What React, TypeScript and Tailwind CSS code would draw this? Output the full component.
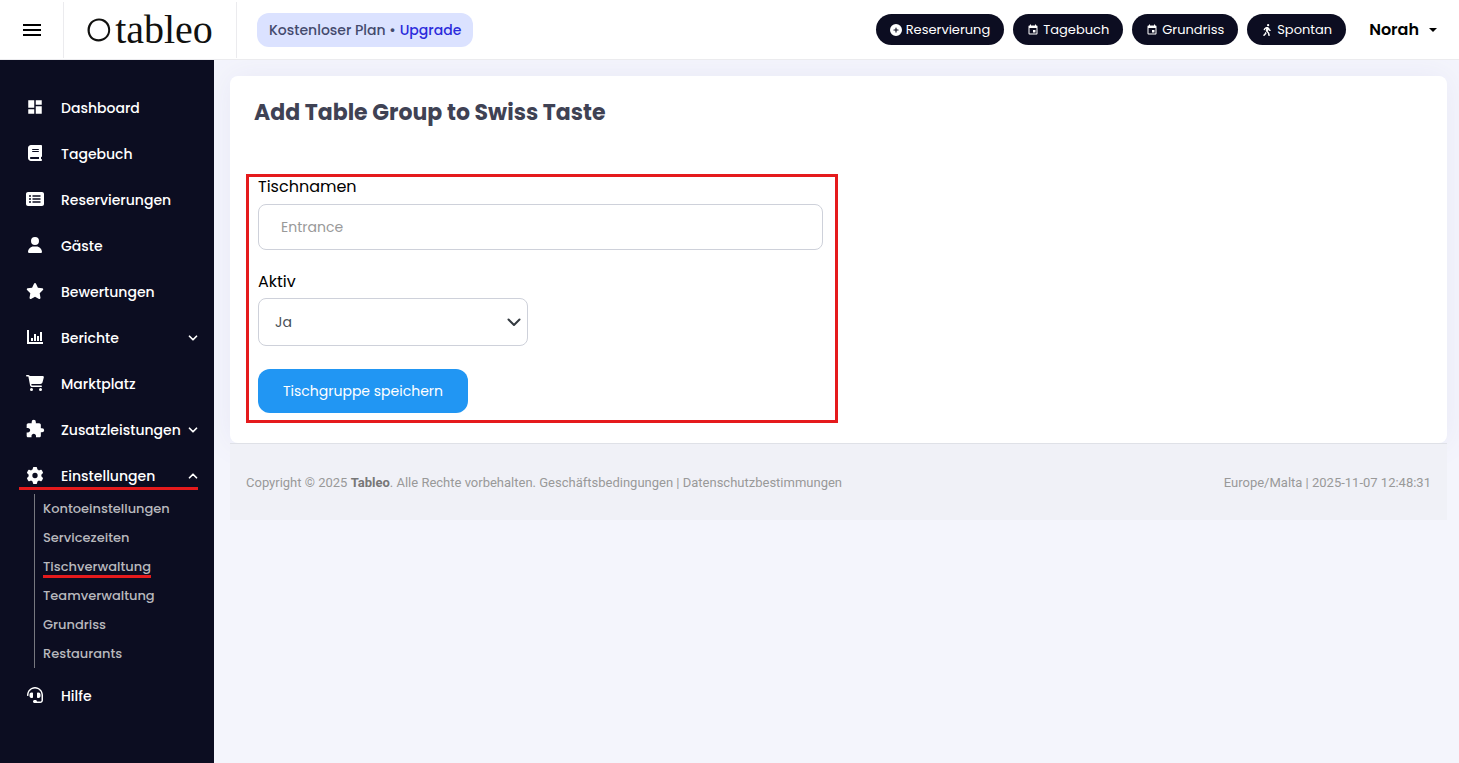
import React from 'react';
import {
  FaBook,
  FaRectangleList,
  FaUser,
  FaStar,
  FaCartShopping,
  FaGear,
  FaCirclePlus,
  FaPersonWalking,
} from 'react-icons/fa6';
import { FaHeadset } from 'react-icons/fa';
import { MdDashboard, MdEvent, MdExtension, MdMenu } from 'react-icons/md';
import { ChevronDown, ChevronUp } from 'lucide-react';

function ChartIcon({ className }: { className?: string }) {
  return (
    <svg viewBox="0 0 18 16" className={className} fill="currentColor">
      <path d="M1 1h2v12h14v2H1zM5 9h2v3H5zM8 5h2v7H8zM11 7h2v5h-2zM14 3h2v9h-2z" />
    </svg>
  );
}

const menu = [
  { label: 'Dashboard', icon: MdDashboard, size: 'h-[18px] w-[18px]' },
  { label: 'Tagebuch', icon: FaBook, size: 'h-4 w-[18px]' },
  { label: 'Reservierungen', icon: FaRectangleList, size: 'h-4 w-[18px]' },
  { label: 'Gäste', icon: FaUser, size: 'h-4 w-[18px]' },
  { label: 'Bewertungen', icon: FaStar, size: 'h-[18px] w-[18px]' },
  { label: 'Berichte', icon: ChartIcon, size: 'h-4 w-[18px]', chevron: 'down' },
  { label: 'Marktplatz', icon: FaCartShopping, size: 'h-4 w-[18px]' },
  { label: 'Zusatzleistungen', icon: MdExtension, size: 'h-5 w-5', chevron: 'down' },
];

const settings = [
  'Kontoeinstellungen',
  'Servicezeiten',
  'Tischverwaltung',
  'Teamverwaltung',
  'Grundriss',
  'Restaurants',
];

const actions = [
  { label: 'Reservierung', icon: FaCirclePlus },
  { label: 'Tagebuch', icon: MdEvent },
  { label: 'Grundriss', icon: MdEvent },
  { label: 'Spontan', icon: FaPersonWalking },
];

function Logo() {
  return (
    <a href="#" aria-label="tableo" className="flex items-center gap-1 text-[#11110f]">
      <svg viewBox="0 0 24 24" className="h-6 w-6" fill="currentColor" fillRule="evenodd">
        <path d="M12 .5C18.5.5 23.200 5.200 23.200 11.800C23.200 18.500 18 23.500 11.500 23.500C5 23.500.5 18.500.5 12C.5 5.500 5.500.5 12 .5ZM12.500 2.500C7 2 3.300 6 2.800 11.500C2.300 17 6 21.300 11.500 21.300C17 21.300 21.200 17.300 21.200 12C21.200 7 17.500 3 12.500 2.500Z" />
      </svg>
      <span className="font-['Liberation_Serif',serif] text-[40px] leading-10">tableo</span>
    </a>
  );
}

function Header() {
  return (
    <header className="relative z-10 flex h-15 items-center border-b border-[#ebebee] bg-white">
      <button aria-label="Menü" className="flex w-[63px] justify-center">
        <MdMenu className="h-6 w-6" />
      </button>
      <div className="flex h-14 w-[174px] items-center justify-center border-x border-[#ebebee]">
        <Logo />
      </div>
      <div className="ml-5 flex h-[34px] items-center gap-1 rounded-xl bg-[#dbe2ff] px-3 text-sm font-medium text-[#444a6d]">
        <span>Kostenloser Plan •</span>
        <a href="#" className="text-[#2b2bdb]">Upgrade</a>
      </div>
      <div className="ml-auto flex items-center gap-[9px]">
        {actions.map(({ label, icon: Icon }) => (
          <button
            key={label}
            className="flex h-[31px] items-center gap-1 rounded-full bg-[#0c0d21] px-[14px] text-[13px] text-white"
          >
            <Icon className="h-3 w-3" />
            {label}
          </button>
        ))}
      </div>
      <button className="mr-[22px] ml-[23px] flex items-center gap-[10px] text-base font-semibold">
        Norah
        <span className="border-x-4 border-t-4 border-x-transparent border-t-black" />
      </button>
    </header>
  );
}

function Sidebar() {
  return (
    <nav className="relative z-10 w-[214px] shrink-0 bg-[#0c0d21] pt-[25px] text-sm font-medium text-white">
      {menu.map(({ label, icon: Icon, size, chevron }) => (
        <a key={label} href="#" className="flex h-[46px] items-center pr-[14px] pl-[26px]">
          <span className="mr-[17px] mb-[2px] flex w-[18px] justify-center">
            <Icon className={`shrink-0 ${size}`} />
          </span>
          {label}
          {chevron && <ChevronDown className="ml-auto h-[14px] w-[14px]" strokeWidth={3} />}
        </a>
      ))}
      <a href="#" className="relative flex h-[46px] items-center pr-[14px] pl-[26px]">
        <FaGear className="mr-[17px] mb-[2px] h-[17px] w-[18px]" />
        Einstellungen
        <ChevronUp className="ml-auto h-[14px] w-[14px]" strokeWidth={3} />
        <span className="absolute right-4 bottom-[9px] left-[19px] h-[3px] bg-[#e51a1c]" />
      </a>
      <ul className="-mt-[5px] ml-[34px] border-l border-[#77777f] pl-2 text-[13px] text-[#b8b8bd]">
        {settings.map((label) => (
          <li key={label} className="flex h-[29px] items-center pt-[2px]">
            <a href="#" className="relative">
              {label}
              {label === 'Tischverwaltung' && (
                <span className="absolute inset-x-0 -bottom-px h-[3px] bg-[#e51a1c]" />
              )}
            </a>
          </li>
        ))}
      </ul>
      <a href="#" className="mt-[5px] flex h-[46px] items-center pl-[26px]">
        <FaHeadset className="mr-[17px] mb-[2px] h-4 w-[18px]" />
        Hilfe
      </a>
    </nav>
  );
}

function TableGroupForm() {
  return (
    <section className="rounded-lg bg-white px-4 pt-[21px] pb-5 shadow-[0_0_30px_#e8e8f6]">
      <h1 className="ml-2 text-[22px] leading-8 font-bold text-[#3f4254]">
        Add Table Group to Swiss Taste
      </h1>
      <form className="mt-[45px] flex w-[592px] max-w-full flex-col items-start border-3 border-[#e51a1c] px-[9px] pb-[7px]">
        <label htmlFor="name" className="h-[27px] text-base leading-5">Tischnamen</label>
        <input
          id="name"
          placeholder="Entrance"
          className="h-[46px] w-[565px] max-w-full rounded-lg border border-[#ced1da] px-[22px] text-sm placeholder:text-[#999]"
        />
        <label htmlFor="active" className="mt-[22px] h-[26px] text-base leading-5">Aktiv</label>
        <div className="relative w-[270px] max-w-full">
          <select
            id="active"
            className="h-12 w-full appearance-none rounded-lg border border-[#ced1da] bg-white px-4 text-sm text-[#495057]"
          >
            <option>Ja</option>
            <option>Nein</option>
          </select>
          <svg
            viewBox="0 0 16 16"
            className="pointer-events-none absolute top-4 right-[6px] h-4 w-4"
            fill="none"
            stroke="#343a40"
            strokeWidth="2"
            strokeLinecap="round"
            strokeLinejoin="round"
          >
            <path d="M2.500 5.500 8 11l5.500-5.500" />
          </svg>
        </div>
        <button type="button" className="mt-[23px] h-11 w-[210px] rounded-xl bg-[#2196f3] text-sm text-white">
          Tischgruppe speichern
        </button>
      </form>
    </section>
  );
}

function Footer() {
  return (
    <footer className="relative flex min-h-[77px] items-center justify-between border-t border-[#dfe1e7] bg-[#f0f1f7] px-4 pt-px font-[Roboto,sans-serif] text-[13px] text-[#999]">
      <p>
        Copyright © 2025 <b className="text-[#777]">Tableo</b>. Alle Rechte vorbehalten.{' '}
        <a href="#">Geschäftsbedingungen</a> | <a href="#">Datenschutzbestimmungen</a>
      </p>
      <p>Europe/Malta | 2025-11-07 12:48:31</p>
    </footer>
  );
}

export default function App() {
  return (
    <div className="flex min-h-screen flex-col bg-[#f4f5fc] font-[Poppins,Inter,sans-serif] text-black">
      <Header />
      <div className="flex grow">
        <Sidebar />
        <main className="min-w-0 grow pt-4 pr-3 pl-4">
          <TableGroupForm />
          <Footer />
        </main>
      </div>
    </div>
  );
}
